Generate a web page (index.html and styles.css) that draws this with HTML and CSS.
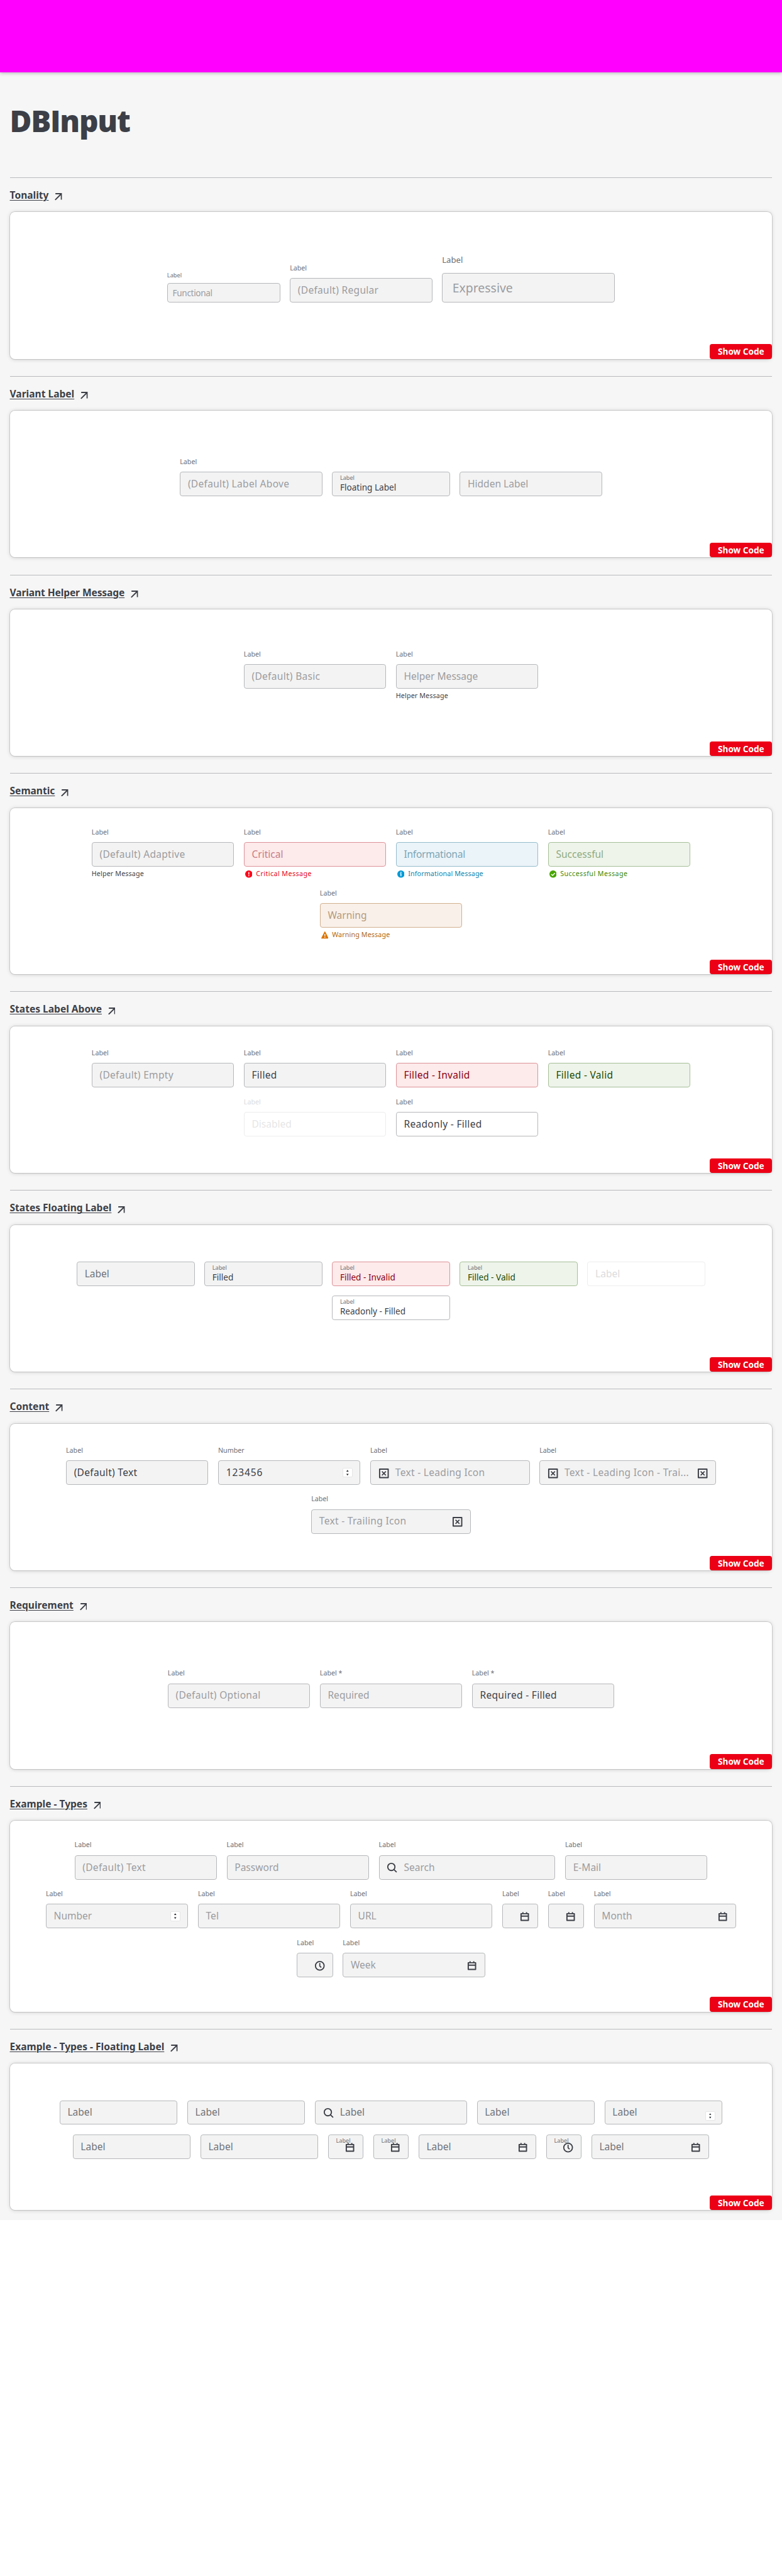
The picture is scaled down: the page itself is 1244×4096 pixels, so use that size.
FILE: index.html
```html
<!DOCTYPE html>
<html lang="en">
<head>
<meta charset="utf-8">
<title>DBInput</title>
<link rel="stylesheet" href="styles.css">
</head>
<body>
<svg class="sprite" aria-hidden="true">
  <symbol id="arrow" viewBox="0 0 12 12"><path d="M1.200 1H11v9.800M11 1 .8 11.200" fill="none" stroke="currentColor" stroke-width="2"/></symbol>
  <symbol id="xbox" viewBox="0 0 20 20"><path d="M3 3h14v14H3z" fill="none" stroke="currentColor" stroke-width="2" stroke-linejoin="round"/><path d="M6.800 6.800l6.400 6.400M13.200 6.800l-6.400 6.400" fill="none" stroke="currentColor" stroke-width="1.700"/></symbol>
  <symbol id="search" viewBox="0 0 20 20"><circle cx="8.800" cy="8.800" r="5.900" fill="none" stroke="currentColor" stroke-width="1.900"/><path d="M13 13l4.400 4.400" stroke="currentColor" stroke-width="1.900"/></symbol>
  <symbol id="calendar" viewBox="0 0 20 20"><path d="M4 5h12v11H4zM4 9h12M7 2.500V5M13 2.500V5" fill="none" stroke="currentColor" stroke-width="2" stroke-linejoin="round"/></symbol>
  <symbol id="clock" viewBox="0 0 20 20"><circle cx="10" cy="10" r="7.100" fill="none" stroke="currentColor" stroke-width="1.900"/><path d="M10 5.500V10.400l2.400 2.400" fill="none" stroke="currentColor" stroke-width="1.800"/></symbol>
  <symbol id="critical" viewBox="0 0 12 12"><circle cx="6" cy="6" r="6" fill="currentColor"/><path d="M6 2.600v4M6 7.800v1.600" stroke="#fff" stroke-width="1.500"/></symbol>
  <symbol id="info" viewBox="0 0 12 12"><circle cx="6" cy="6" r="6" fill="currentColor"/><path d="M6 2.400V4M4.700 5.500H6v4" stroke="#fff" stroke-width="1.500" fill="none"/></symbol>
  <symbol id="success" viewBox="0 0 12 12"><circle cx="6" cy="6" r="6" fill="currentColor"/><path d="M3 6.200l2.200 2.100L9 4.300" stroke="#fff" stroke-width="1.500" fill="none"/></symbol>
  <symbol id="warning" viewBox="0 0 12 12"><path d="M6 .8 11.200 11.200H.8z" fill="currentColor" stroke="currentColor" stroke-width="1.400" stroke-linejoin="round"/><path d="M6 4v3.600M6 8.800v1.500" stroke="#fff" stroke-width="1.400"/></symbol>
  <symbol id="spin" viewBox="0 0 16 16"><path d="M8 2.800 10.200 6H5.800zM8 13.200 10.200 10H5.800z" fill="#26282d"/></symbol>
</svg>
<div class="page">
<header class="banner"></header>
<main>
<h1>DBInput</h1>

<section>
  <h2><a>Tonality</a><svg><use href="#arrow"/></svg></h2>
  <div class="card pad-tonality">
    <div class="row end">
      <div class="field functional"><label>Label</label><div class="box ph">Functional</div></div>
      <div class="field"><label>Label</label><div class="box ph wide">(Default) Regular</div></div>
      <div class="field expressive"><label>Label</label><div class="box ph">Expressive</div></div>
    </div>
    <button>Show Code</button>
  </div>
</section>

<section>
  <h2><a>Variant Label</a><svg><use href="#arrow"/></svg></h2>
  <div class="card pad-76">
    <div class="row end">
      <div class="field"><label>Label</label><div class="box ph wide">(Default) Label Above</div></div>
      <div class="field float"><div class="box"><small>Label</small><span>Floating Label</span></div></div>
      <div class="field"><div class="box ph">Hidden Label</div></div>
    </div>
    <button>Show Code</button>
  </div>
</section>

<section>
  <h2><a class="snug">Variant Helper Message</a><svg><use href="#arrow"/></svg></h2>
  <div class="card pad-66">
    <div class="row">
      <div class="field"><label>Label</label><div class="box ph wide">(Default) Basic</div></div>
      <div class="field"><label>Label</label><div class="box ph">Helper Message</div><p>Helper Message</p></div>
    </div>
    <button>Show Code</button>
  </div>
</section>

<section>
  <h2><a>Semantic</a><svg><use href="#arrow"/></svg></h2>
  <div class="card pad-32 tall-272">
    <div class="row">
      <div class="field"><label>Label</label><div class="box ph wide">(Default) Adaptive</div><p>Helper Message</p></div>
      <div class="field critical"><label>Label</label><div class="box ph">Critical</div><p class="spread"><svg><use href="#critical"/></svg>Critical Message</p></div>
      <div class="field info"><label>Label</label><div class="box ph tight">Informational</div><p><svg><use href="#info"/></svg>Informational Message</p></div>
      <div class="field success"><label>Label</label><div class="box ph">Successful</div><p class="spread"><svg><use href="#success"/></svg>Successful Message</p></div>
    </div>
    <div class="row">
      <div class="field warning"><label>Label</label><div class="box ph">Warning</div><p><svg><use href="#warning"/></svg>Warning Message</p></div>
    </div>
    <button>Show Code</button>
  </div>
</section>

<section>
  <h2><a>States Label Above</a><svg><use href="#arrow"/></svg></h2>
  <div class="card pad-36">
    <div class="row">
      <div class="field"><label>Label</label><div class="box ph wide">(Default) Empty</div></div>
      <div class="field"><label>Label</label><div class="box wide">Filled</div></div>
      <div class="field critical"><label>Label</label><div class="box wide">Filled - Invalid</div></div>
      <div class="field success"><label>Label</label><div class="box wide">Filled - Valid</div></div>
    </div>
    <div class="row">
      <div class="field disabled"><label>Label</label><div class="box ph">Disabled</div></div>
      <div class="field readonly"><label>Label</label><div class="box wide">Readonly - Filled</div></div>
    </div>
    <button>Show Code</button>
  </div>
</section>

<section>
  <h2><a>States Floating Label</a><svg><use href="#arrow"/></svg></h2>
  <div class="card pad-60">
    <div class="row">
      <div class="field float"><div class="box empty">Label</div></div>
      <div class="field float"><div class="box"><small>Label</small><span>Filled</span></div></div>
      <div class="field float critical"><div class="box"><small>Label</small><span>Filled - Invalid</span></div></div>
      <div class="field float success"><div class="box"><small>Label</small><span>Filled - Valid</span></div></div>
      <div class="field float disabled"><div class="box empty">Label</div></div>
    </div>
    <div class="row">
      <div class="field float readonly"><div class="box"><small>Label</small><span>Readonly - Filled</span></div></div>
    </div>
    <button>Show Code</button>
  </div>
</section>

<section>
  <h2><a>Content</a><svg><use href="#arrow"/></svg></h2>
  <div class="card pad-36">
    <div class="row">
      <div class="field"><label>Label</label><div class="box wide">(Default) Text</div></div>
      <div class="field"><label>Number</label><div class="box digits">123456<svg class="spinner"><use href="#spin"/></svg></div></div>
      <div class="field one-icon"><label>Label</label><div class="box ph wide"><svg class="lead"><use href="#xbox"/></svg>Text - Leading Icon</div></div>
      <div class="field two-icons"><label>Label</label><div class="box ph wide"><svg class="lead"><use href="#xbox"/></svg>Text - Leading Icon - Trai...<svg class="trail"><use href="#xbox"/></svg></div></div>
    </div>
    <div class="row">
      <div class="field one-icon"><label>Label</label><div class="box ph wide">Text - Trailing Icon<svg class="trail"><use href="#xbox"/></svg></div></div>
    </div>
    <button>Show Code</button>
  </div>
</section>

<section>
  <h2><a>Requirement</a><svg><use href="#arrow"/></svg></h2>
  <div class="card pad-76">
    <div class="row">
      <div class="field"><label>Label</label><div class="box ph wide">(Default) Optional</div></div>
      <div class="field"><label>Label *</label><div class="box ph">Required</div></div>
      <div class="field"><label>Label *</label><div class="box wide">Required - Filled</div></div>
    </div>
    <button>Show Code</button>
  </div>
</section>

<section>
  <h2><a>Example - Types</a><svg><use href="#arrow"/></svg></h2>
  <div class="card pad-32 tall-312">
    <div class="row">
      <div class="field"><label>Label</label><div class="box ph wide">(Default) Text</div></div>
      <div class="field"><label>Label</label><div class="box ph">Password</div></div>
      <div class="field two-icons"><label>Label</label><div class="box ph"><svg class="lead"><use href="#search"/></svg>Search</div></div>
      <div class="field"><label>Label</label><div class="box ph">E-Mail</div></div>
    </div>
    <div class="row">
      <div class="field"><label>Label</label><div class="box ph">Number<svg class="spinner"><use href="#spin"/></svg></div></div>
      <div class="field"><label>Label</label><div class="box ph">Tel</div></div>
      <div class="field"><label>Label</label><div class="box ph">URL</div></div>
      <div class="field narrow"><label>Label</label><div class="box"><svg class="trail"><use href="#calendar"/></svg></div></div>
      <div class="field narrow"><label>Label</label><div class="box"><svg class="trail"><use href="#calendar"/></svg></div></div>
      <div class="field"><label>Label</label><div class="box ph">Month<svg class="trail"><use href="#calendar"/></svg></div></div>
    </div>
    <div class="row">
      <div class="field narrow"><label>Label</label><div class="box"><svg class="trail"><use href="#clock"/></svg></div></div>
      <div class="field"><label>Label</label><div class="box ph">Week<svg class="trail"><use href="#calendar"/></svg></div></div>
    </div>
    <button>Show Code</button>
  </div>
</section>

<section class="last">
  <h2><a>Example - Types - Floating Label</a><svg><use href="#arrow"/></svg></h2>
  <div class="card pad-60">
    <div class="row">
      <div class="field float"><div class="box empty">Label</div></div>
      <div class="field float"><div class="box empty">Label</div></div>
      <div class="field float with-search"><div class="box empty"><svg class="lead"><use href="#search"/></svg>Label</div></div>
      <div class="field float"><div class="box empty">Label</div></div>
      <div class="field float"><div class="box empty">Label<svg class="spinner low"><use href="#spin"/></svg></div></div>
    </div>
    <div class="row">
      <div class="field float"><div class="box empty">Label</div></div>
      <div class="field float"><div class="box empty">Label</div></div>
      <div class="field float slim"><div class="box"><small>Label</small><svg class="overlay"><use href="#calendar"/></svg></div></div>
      <div class="field float slim"><div class="box"><small>Label</small><svg class="overlay"><use href="#calendar"/></svg></div></div>
      <div class="field float"><div class="box empty">Label<svg class="trail"><use href="#calendar"/></svg></div></div>
      <div class="field float slim"><div class="box"><small>Label</small><svg class="overlay"><use href="#clock"/></svg></div></div>
      <div class="field float"><div class="box empty">Label<svg class="trail"><use href="#calendar"/></svg></div></div>
    </div>
    <button>Show Code</button>
  </div>
</section>
</main>
</div>
</body>
</html>
```
FILE: styles.css
```css
* { box-sizing: border-box; margin: 0; padding: 0; }
html { background: #fff; }
body { font-family: "Noto Sans", "Liberation Sans", sans-serif; color: #3c3f47; zoom: 0.971875; }
.sprite { position: absolute; width: 0; height: 0; }
.page { width: 1280px; background: #f6f6f6; }
.banner { position: relative; height: 118px; background: #f0f; box-shadow: 0 1px 6px rgba(0, 0, 0, .3); }
main { padding: 0 16px; }
h1 { height: 172px; padding-top: 46px; font: 800 49px/67px "Open Sans", "Noto Sans", sans-serif; letter-spacing: -1.3px; }

section { border-top: 1px solid #b9babd; padding-bottom: 28px; }
section.last { padding-bottom: 16px; }
h2 { display: flex; align-items: center; gap: 10px; height: 56px; padding-top: 1px; font-size: 16px; font-weight: 700; line-height: 22px; }
h2 a { text-decoration: underline; text-decoration-thickness: 1px; text-underline-offset: 2px; }
h2 .snug { letter-spacing: -.1px; }
h2 svg { width: 12px; height: 12px; margin-top: 5px; }

.card { position: relative; display: flex; flex-direction: column; gap: 16px; height: 240px; background: #fff; border-radius: 8px; box-shadow: 0 0 0 1px rgba(0, 0, 0, .12), 0 1px 7px rgba(0, 0, 0, .16); }
.tall-272 { height: 272px; }
.tall-312 { height: 312px; }
.pad-tonality { padding-top: 72px; }
.pad-76 { padding-top: 76px; }
.pad-66 { padding-top: 66px; }
.pad-60 { padding-top: 60px; }
.pad-36 { padding-top: 36px; }
.pad-32 { padding-top: 32px; }

button { position: absolute; right: 0; bottom: 0; width: 102px; height: 24px; border: 0; border-radius: 4px; background: #ec0016; color: #fff; font: 700 14px/24px "Noto Sans", sans-serif; }

.row { display: flex; justify-content: center; gap: 16px; }
.row.end { align-items: flex-end; }

.field { --line: #b6b7ba; --fill: #f3f3f3; --ink: #3c3f47; --hint: #9b9ca0; --note: #3c3f47; width: 233px; }
.field.one-icon { width: 261px; }
.field.two-icons { width: 289px; }
.field.narrow { width: 59px; }
.field label { display: block; height: 24px; font-size: 11px; line-height: 16px; color: #6c6e74; }
.box { display: flex; align-items: center; height: 40px; padding: 0 12px; border: 1px solid var(--line); border-radius: 4px; background: var(--fill); color: var(--ink); font-size: 16px; line-height: 22px; white-space: nowrap; }
.box.ph { color: var(--hint); }
.wide { letter-spacing: .3px; }
.tight { letter-spacing: -.25px; }
.digits { letter-spacing: .9px; }
.box svg { flex: none; width: 20px; height: 20px; color: #3c3f47; }
.box .lead { margin: 2px 9px 0 -1px; }
.box .trail { margin: 2px -1px 0 auto; }
.box .spinner { width: 16px; height: 16px; margin-left: auto; background: #fff; border: 1px solid #e6e6e6; border-radius: 2px; }
.box .spinner.low { height: 15px; margin-top: 12px; margin-right: -1px; }
.field p { display: flex; align-items: center; height: 16px; margin-top: 4px; font-size: 11px; line-height: 16px; letter-spacing: .15px; color: var(--note); }
.field .spread { letter-spacing: .45px; }
.field p svg { width: 12px; height: 12px; margin: 0 6px 0 2px; color: var(--icon); }

.functional { width: 185px; }
.field.functional label { height: 20px; font-size: 9.5px; line-height: 14px; }
.functional .box { height: 32px; padding: 0 8px; font-size: 14px; letter-spacing: -.35px; }
.expressive { width: 283px; }
.field.functional { width: 185px; }
.field.expressive { width: 283px; }
.field.expressive label { height: 28px; font-size: 13.6px; line-height: 14px; }
.expressive .box { height: 48px; padding: 0 16px; font-size: 20px; }

.critical { --line: #dc9299; --fill: #fdeaea; --ink: #8b0013; --hint: #c67c86; --note: #e50021; --icon: #ff0018; }
.info { --line: #94bccb; --fill: #ebf4f9; --hint: #7ba5b6; --note: #0d82aa; --icon: #039ad6; }
.success { --line: #a5bf97; --fill: #eef4ea; --ink: #214b00; --hint: #8eaa7d; --note: #3d8600; --icon: #48a500; }
.warning { --line: #d2b08e; --fill: #f9f0e9; --hint: #b59a7c; --note: #b06612; --icon: #dc7400; }
.readonly { --fill: #fff; }
.disabled { --fill: #fff; opacity: .25; }
.disabled .box { border-color: #bbb; }

.float { width: 193px; }
.float.with-search { width: 249px; }
.float.slim { width: 58px; }
.float .box { position: relative; flex-direction: column; align-items: flex-start; padding-top: 3px; }
.float small { font-size: 9.4px; line-height: 13px; color: #6c6e74; }
.float span { font-size: 14px; line-height: 17px; }
.float .box.empty { flex-direction: row; align-items: center; padding-top: 0; color: #707278; }
.float .overlay { position: absolute; right: 11px; top: 10px; }
```
